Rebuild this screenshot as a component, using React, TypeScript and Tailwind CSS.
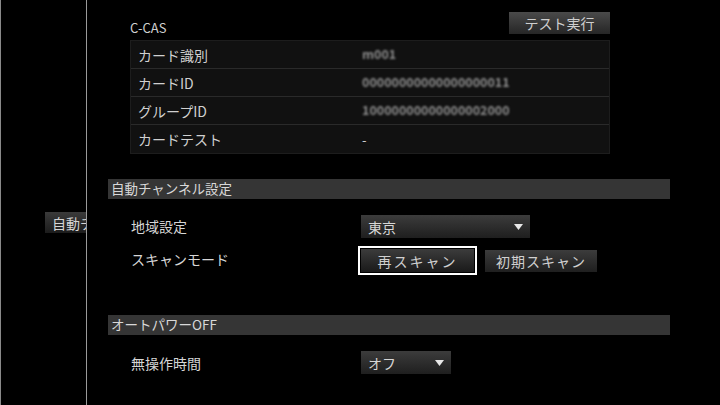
import React from 'react';

const font = { fontFamily: '"Noto Sans CJK JP", "Noto Sans", sans-serif' };

const rows = [
  { label: 'カード識別', value: 'm001', blur: true },
  { label: 'カードID', value: '00000000000000000011', blur: true },
  { label: 'グループID', value: '10000000000000002000', blur: true },
  { label: 'カードテスト', value: '-', blur: false },
];

const Arrow = () => (
  <svg width="9" height="6" viewBox="0 0 9 6" className="shrink-0">
    <path d="M0 0h9L4.5 6z" fill="#e8e8e8" />
  </svg>
);

const Select = ({ value, width }: { value: string; width: string }) => (
  <div
    className={`${width} h-[23px] flex items-center justify-between pl-[7px] pr-[7px] bg-gradient-to-b from-[#3c3c3c] to-[#1f1f1f] text-[14px] text-[#d6d6d6]`}
  >
    <span>{value}</span>
    <Arrow />
  </div>
);

const SectionHeader = ({ title }: { title: string }) => (
  <div className="w-[562px] h-[20px] bg-[#353535] flex items-center pl-[3px] text-[13.5px] text-[#d8d8d8]">
    {title}
  </div>
);

export default function App() {
  return (
    <div className="w-[720px] h-[405px] bg-black flex overflow-hidden leading-none" style={font}>
      {/* left column */}
      <div className="w-[87px] h-full border-l border-[#8a8a8a] border-r border-r-[#9a9a9a] flex flex-col items-end pt-[212px] overflow-hidden">
        <div className="w-[41px] h-[21px] bg-gradient-to-b from-[#3a3a3a] to-[#1c1c1c] flex items-center pl-[7px] text-[14px] text-[#d6d6d6] whitespace-nowrap overflow-hidden">
          自動チ
        </div>
      </div>

      {/* main */}
      <div className="flex-1 flex flex-col pl-[21px] pt-[12px]">
        {/* C-CAS */}
        <div className="ml-[22px] w-[480px] flex flex-col">
          <div className="flex items-end justify-between">
            <span className="text-[13px] text-[#d0d0d0]">C-CAS</span>
            <button className="w-[101px] h-[22px] bg-gradient-to-b from-[#4a4a4a] to-[#262626] text-[14px] text-[#cfcfcf] flex items-center justify-center">
              テスト実行
            </button>
          </div>
          <div className="mt-[6px] border border-[#1d1d1d] bg-[#111111]">
            {rows.map((r, i) => (
              <div
                key={r.label}
                className={`h-[28px] flex items-center ${i < rows.length - 1 ? 'border-b border-[#2a2a2a]' : ''}`}
              >
                <span className="w-[231px] pl-[7px] text-[14px] text-[#d0d0d0]">{r.label}</span>
                {r.blur ? (
                  <span className="text-[12.5px] font-bold text-[#8f8f8f] blur-[1.3px] whitespace-nowrap">
                    {r.value}
                  </span>
                ) : (
                  <span className="text-[13px] text-[#cfcfcf]">{r.value}</span>
                )}
              </div>
            ))}
          </div>
        </div>

        {/* 自動チャンネル設定 */}
        <div className="mt-[25px]">
          <SectionHeader title="自動チャンネル設定" />
        </div>
        <div className="mt-[16px] ml-[23px] flex items-center">
          <span className="w-[230px] text-[14px] text-[#d6d6d6] -mt-[2px]">地域設定</span>
          <Select value="東京" width="w-[169px]" />
        </div>
        <div className="mt-[8px] ml-[23px] flex items-center">
          <span className="w-[227px] text-[14px] text-[#d6d6d6] -mt-[4px]">スキャンモード</span>
          <div className="w-[119px] h-[29px] border-2 border-white p-[1px]">
            <div className="w-full h-full bg-gradient-to-b from-[#3c3c3c] to-[#1a1a1a] flex items-center justify-center text-[14px] text-[#d0d0d0] tracking-[2px]">
              再スキャン
            </div>
          </div>
          <div className="ml-[8px] w-[112px] h-[22px] bg-gradient-to-b from-[#3c3c3c] to-[#1f1f1f] flex items-center justify-center text-[14px] text-[#d0d0d0] tracking-[1px]">
            初期スキャン
          </div>
        </div>

        {/* オートパワーOFF */}
        <div className="mt-[40px]">
          <SectionHeader title="オートパワーOFF" />
        </div>
        <div className="mt-[16px] ml-[23px] flex items-center">
          <span className="w-[230px] text-[14px] text-[#d6d6d6]">無操作時間</span>
          <Select value="オフ" width="w-[90px]" />
        </div>
      </div>
    </div>
  );
}
